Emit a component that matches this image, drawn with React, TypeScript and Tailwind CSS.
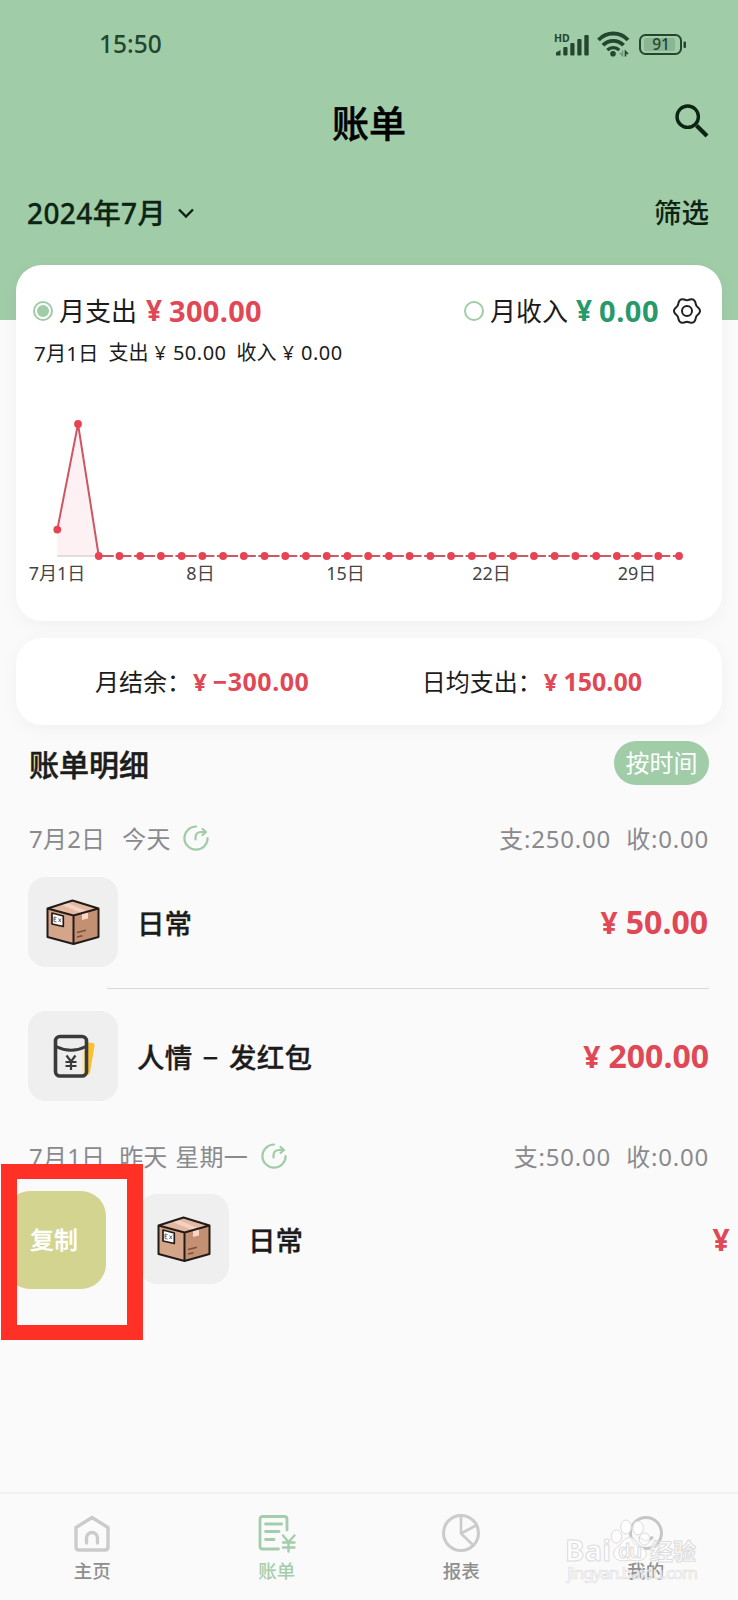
import type { ReactNode } from "react"

const days = Array.from({ length: 31 }, (_, i) => i)
const spend = [50, 250]

const chartX = (day: number) => 57.3 + day * 20.725
const chartY = (value: number) => 156 - value * 0.528

// six soft lobes around the centre
const gearPoints = Array.from({ length: 72 }, (_, i) => {
    const a = (i * Math.PI) / 36
    const r = 11.9 + 1.1 * Math.cos(6 * a)
    return `${(14 + r * Math.cos(a)).toFixed(2)},${(14 + r * Math.sin(a)).toFixed(2)}`
}).join(" ")

function StatusIcons() {
    return (
        <svg className="w-[134px] h-[26px]" viewBox="553 30 134 26" fill="none">
            <text x="554" y="41" fontSize="10.5" fontWeight="700" fill="#24452e">HD</text>
            <g fill="#24452e">
                <path d="M556 51.5l4.5-2.5v5.5h-4.5z" />
                <rect x="563.3" y="46" width="4.2" height="8.5" rx="1" />
                <rect x="570.3" y="42" width="4.2" height="12.5" rx="1" />
                <rect x="577.3" y="38" width="4.2" height="16.5" rx="1" />
                <rect x="584.3" y="34" width="4.4" height="20.5" rx="1" />
            </g>
            <g stroke="#24452e" strokeWidth="3.8">
                <path d="M598.5 39a20 20 0 0 1 29.5 0" />
                <path d="M603 44.300a14 14 0 0 1 20.5 0" />
                <path d="M607.3 49.200a8.500 8.500 0 0 1 12 0" strokeWidth="3.200" />
            </g>
            <circle cx="613" cy="52.800" r="2.800" fill="#24452e" />
            <path d="M622.5 49.500v5l-2.500-2.500" stroke="#6b9a76" strokeWidth="1.500" />
            <path d="M625.5 55.500v-5l2.500 2.500" stroke="#24452e" strokeWidth="1.600" />
            <rect x="640" y="34" width="41" height="19" rx="5.500" stroke="#24452e" strokeWidth="2" />
            <rect x="644" y="37" width="31" height="13" rx="2" fill="#8ab694" />
            <text x="661" y="49.200" fontSize="15.500" fontWeight="500" fill="#24452e" textAnchor="middle">91</text>
            <rect x="683.500" y="40.500" width="2.500" height="6.500" rx="1" fill="#24452e" />
        </svg>
    )
}

function SearchIcon() {
    return (
        <svg className="w-[34px] h-[34px] -mt-[3px]" viewBox="0 0 34 34" fill="none" stroke="#0c2412">
            <circle cx="12.700" cy="12.700" r="10.700" strokeWidth="3.400" />
            <path d="M21.500 21.500L32 32" strokeWidth="4.200" />
        </svg>
    )
}

function GearIcon() {
    return (
        <svg className="w-7 h-7" viewBox="0 0 28 28" fill="none" stroke="#222" strokeWidth="2" strokeLinejoin="round">
            <polygon points={gearPoints} />
            <circle cx="14" cy="14" r="5" />
        </svg>
    )
}

function ShareIcon() {
    return (
        <svg className="w-[26px] h-[26px] -mt-[2px]" viewBox="0 0 26 26" fill="none" stroke="#a0cda8" strokeWidth="2.200" strokeLinecap="round">
            <path d="M13 1.500A11.600 11.600 0 1 0 24.600 13" />
            <path d="M12.500 14.500V13Q12.500 7 18 7H22.500" />
            <path d="M19.500 4L23 7L19.500 10" strokeLinejoin="round" />
        </svg>
    )
}

function BoxIcon() {
    return (
        <svg className="w-[54px] h-[47px]" viewBox="26.500 28 54 47" strokeLinejoin="round">
            <path d="M28 37.500L54 44.500V73L28 66Z" fill="#d5a58a" />
            <path d="M54 44.500L79 37.500V66L54 73Z" fill="#c49074" />
            <path d="M53 29.500L79 37.500L54 44.500L28 37.500Z" fill="#e3b9a2" />
            <path d="M41 33.500L47 31.500L68.500 40.500L62.500 42.300Z" fill="#f3d2c3" />
            <path d="M62.500 42.500L68.500 41V47.500L62.500 49Z" fill="#fbd5c5" />
            <path d="M53 29.500L79 37.500V66L54 73L28 66V37.500ZM28 37.500L54 44.500L79 37.500M54 44.500V73" fill="none" stroke="#221c18" strokeWidth="2" />
            <path d="M32.500 42L43.800 45V55.500L32.500 53Z" fill="#fff" stroke="#221c18" strokeWidth="1.700" />
            <path d="M37 46.500L34.500 46V50.500L37 51M34.500 48.200H36.500M39 47.500L41.500 51M41.500 47.500L39 51" fill="none" stroke="#444" strokeWidth=".8" />
            <path d="M57.500 61.500L66.500 59.200M57.500 66L63 64.700" fill="none" stroke="#7d4f38" strokeWidth="1.500" />
        </svg>
    )
}

function EnvelopeIcon() {
    return (
        <svg className="w-[44px] h-[45px] ml-1" viewBox="0 0 44 45" fill="none">
            <path d="M35 8.500L40 9Q42 9.500 41.500 12L37 38.500Q36.500 41 34 41Z" fill="#fbc02f" />
            <rect x="2.500" y="2.500" width="31" height="39.500" rx="4.500" fill="#ededed" />
            <path d="M29 18L33 16V40H29Z" fill="#fbe6b4" />
            <rect x="2.500" y="2.500" width="31" height="39.500" rx="4.500" stroke="#3a3a3a" strokeWidth="3.600" />
            <path d="M3 12.500Q18 20 33 12.500" stroke="#3a3a3a" strokeWidth="3" />
            <path d="M13.500 21.500L18 27.500L22.500 21.500M18 27.500V36M12.500 28H23.500M12.500 32H23.500" stroke="#3a3a3a" strokeWidth="2.200" />
        </svg>
    )
}

function SpendChart() {
    const line = days.map((d) => `${chartX(d)},${chartY(spend[d] ?? 0)}`).slice(0, 3).join(" ")

    return (
        <svg className="block w-[706px] h-[190px]" viewBox="16 0 706 190" fill="none">
            <path d={`M${chartX(0)} 156V${chartY(50)}L${chartX(1)} ${chartY(250)}L${chartX(2)} 156Z`} fill="#fdf1f3" />
            <path d={`M${chartX(0)} 156H${chartX(2)}`} stroke="#ddd0d2" strokeWidth="1.500" />
            <polyline points={line} stroke="#cf5562" strokeWidth="2" />
            {days.slice(2, 30).map((d) => (
                <path
                    key={d}
                    d={`M${chartX(d)} 156H${chartX(d) + (d % 2 ? 12 : 15)}M${chartX(d) + (d % 2 ? 14.5 : 17.5)} 156H${chartX(d + 1)}`}
                    stroke="#cc5a66"
                    strokeWidth="2"
                />
            ))}
            {days.map((d) => (
                <circle key={d} cx={chartX(d)} cy={chartY(spend[d] ?? 0)} r="3.900" fill="#e84353" />
            ))}
            <g fill="#444" fontSize="18" textAnchor="middle">
                <text x="57" y="180">7月1日</text>
                <text x="200.500" y="180">8日</text>
                <text x="345.500" y="180">15日</text>
                <text x="491.500" y="180">22日</text>
                <text x="637" y="180">29日</text>
            </g>
        </svg>
    )
}

function Tile({ children }: { children: ReactNode }) {
    return (
        <div className="w-[90px] h-[90px] shrink-0 rounded-[18px] bg-[#efefef] flex items-center justify-center">
            {children}
        </div>
    )
}

function Amount({ value }: { value: string }) {
    return (
        <div className="flex items-baseline gap-[8px] text-[32px] font-bold text-[#e04855]">
            <span className="text-[30px]">¥</span>
            <span>{value}</span>
        </div>
    )
}

function DayHeader({ date, label, out }: { date: string; label: ReactNode; out: string }) {
    return (
        <div className="h-[38px] pl-[29px] pr-[29px] flex items-center justify-between text-[24px] leading-none text-[#8a8a8e]">
            <div className="flex items-center">
                <span className="tracking-[0.2px]">{date}</span>
                {label}
                <ShareIcon />
            </div>
            <div className="flex gap-[15px] tracking-[0.8px]">
                <span>支:{out}</span>
                <span>收:0.00</span>
            </div>
        </div>
    )
}

function Tab({ label, color, children }: { label: string; color: string; children: ReactNode }) {
    return (
        <div className="flex-1 flex flex-col items-center pt-[19px]">
            <svg className="w-10 h-10" viewBox="0 0 40 40" fill="none" strokeLinecap="round" strokeLinejoin="round">
                {children}
            </svg>
            <span className={`mt-[8px] text-[18.5px] leading-[20px] font-medium ${color}`}>{label}</span>
        </div>
    )
}

function Watermark() {
    return (
        <svg className="absolute left-[560px] top-[1512px] w-[145px] h-[76px]" viewBox="560 1512 145 76" fill="#fff" fillOpacity=".75" stroke="#dcdcdc" strokeWidth="1">
            <text x="565" y="1561" fontSize="29" fontWeight="700" textLength="46">Bai</text>
            <ellipse cx="616.500" cy="1536.500" rx="5.300" ry="6.500" />
            <ellipse cx="626" cy="1527" rx="5.300" ry="7" />
            <ellipse cx="638" cy="1528" rx="5.300" ry="7" />
            <ellipse cx="644.500" cy="1539" rx="5.300" ry="6" />
            <path d="M630 1537Q635 1538 639 1545Q648 1550 646 1556Q643 1563 630 1560Q617 1563 614 1556Q612 1550 620 1545Q624 1538 630 1537Z" />
            <text x="618" y="1558" fontSize="20" fontWeight="600" textLength="24">du</text>
            <text x="650" y="1560" fontSize="23" fontWeight="700" textLength="46">经验</text>
            <text x="567" y="1579" fontSize="17" textLength="131" strokeWidth=".6">jingyan.baidu.com</text>
        </svg>
    )
}

export default function App() {
    return (
        <div className="relative w-[738px] h-[1600px] overflow-hidden flex flex-col bg-[#fafafa] text-[#1c1c1c] font-['Noto_Sans','Noto_Sans_CJK_SC',sans-serif]">
            <header className="h-[320px] shrink-0 bg-[#a0cca8] text-[#0c2412]">
                <div className="h-[88px] pl-[99px] pr-[51px] flex items-center justify-between">
                    <span className="text-[24.5px] font-medium text-[#24452e]">15:50</span>
                    <StatusIcons />
                </div>
                <div className="h-[68px] px-[29px] flex items-center justify-between">
                    <span className="w-[34px]" />
                    <h1 className="mt-[3px] text-[37px] leading-none font-medium text-black [-webkit-text-stroke:0.5px_currentColor]">账单</h1>
                    <SearchIcon />
                </div>
                <div className="h-[113px] pl-[27px] pr-[29px] flex items-center justify-between text-[28px] leading-none font-medium">
                    <div className="flex items-center gap-[12px] [-webkit-text-stroke:0.3px_currentColor]">
                        <span className="tracking-[0.4px]">2024年7月</span>
                        <svg className="w-4 h-3" viewBox="0 0 16 12" fill="none" stroke="currentColor" strokeWidth="2.400">
                            <path d="M1 2.500L8 9.500L15 2.500" />
                        </svg>
                    </div>
                    <span className="text-[27.5px]">筛选</span>
                </div>
            </header>

            <section className="mx-4 -mt-[55px] h-[356px] shrink-0 rounded-[26px] bg-white shadow-[0_4px_18px_rgba(0,0,0,0.04)] overflow-hidden">
                <div className="h-[68px] pt-[24px] pl-[17px] pr-[21px] flex items-center justify-between text-[26px] leading-none">
                    <div className="flex items-center">
                        <span className="w-5 h-5 rounded-full border-2 border-[#a0cca8] flex items-center justify-center">
                            <span className="w-3 h-3 rounded-full bg-[#a0cca8]" />
                        </span>
                        <span className="ml-[6px]">月支出</span>
                        <span className="ml-[9px] -mt-[2px] text-[28px] font-bold text-[#e04855]">¥</span>
                        <span className="ml-[7px] -mt-[2px] text-[29px] tracking-[0.3px] font-bold text-[#e04855]">300.00</span>
                    </div>
                    <div className="flex items-center">
                        <span className="w-5 h-5 rounded-full border-2 border-[#a0cca8]" />
                        <span className="ml-[6px]">月收入</span>
                        <span className="ml-[8px] -mt-[2px] text-[28px] font-bold text-[#27996a]">¥</span>
                        <span className="ml-[7px] mr-[14px] -mt-[2px] text-[29px] tracking-[0.5px] font-bold text-[#27996a]">0.00</span>
                        <GearIcon />
                    </div>
                </div>
                <div className="h-[40px] pl-[18px] flex items-center text-[20px] leading-none">
                    <span className="text-[20.5px]">7月1日</span>
                    <span className="ml-[10px]">支出</span>
                    <span className="ml-[6px]">¥</span>
                    <span className="ml-[7px] tracking-[0.5px]">50.00</span>
                    <span className="ml-[10px]">收入</span>
                    <span className="ml-[6px]">¥</span>
                    <span className="ml-[7px] tracking-[0.5px]">0.00</span>
                </div>
                <div className="mt-[27px]">
                    <SpendChart />
                </div>
            </section>

            <section className="mx-4 mt-[17px] h-[87px] shrink-0 rounded-[26px] bg-white shadow-[0_4px_18px_rgba(0,0,0,0.04)] flex items-center pl-[79px] pr-[80px] justify-between text-[24px] leading-none">
                <div className="flex items-center">
                    <span>月结余：</span>
                    <span className="ml-[2px] text-[24px] font-bold text-[#e04855]">¥</span>
                    <span className="ml-[6px] text-[25px] tracking-[0.5px] font-bold text-[#e04855]">−300.00</span>
                </div>
                <div className="flex items-center">
                    <span>日均支出：</span>
                    <span className="ml-[2px] text-[24px] font-bold text-[#e04855]">¥</span>
                    <span className="ml-[6px] text-[25px] font-bold text-[#e04855]">150.00</span>
                </div>
            </section>

            <div className="mt-[16px] h-[44px] shrink-0 pl-[29px] pr-7 flex items-center justify-between">
                <h2 className="mt-[4px] text-[30px] leading-none font-medium [-webkit-text-stroke:0.5px_currentColor]">账单明细</h2>
                <button className="w-[95px] h-[44px] mr-px rounded-full bg-[#a0cda8] text-white text-[24px] leading-none">按时间</button>
            </div>

            <div className="mt-[35px] shrink-0">
                <DayHeader date="7月2日" label={<span className="ml-[17px] mr-[12px] tracking-[0.3px]">今天</span>} out="250.00" />
                <div className="mt-[19px] h-[90px] pl-7 pr-[30px] flex items-center">
                    <Tile><BoxIcon /></Tile>
                    <span className="ml-[19px] mt-[3px] flex-1 text-[27.5px] font-medium [-webkit-text-stroke:0.3px_currentColor]">日常</span>
                    <Amount value="50.00" />
                </div>
                <div className="mt-[21px] ml-[107px] mr-[29px] h-px bg-[#d9d9d9]" />
                <div className="mt-[22px] h-[90px] pl-7 pr-[29px] flex items-center">
                    <Tile><EnvelopeIcon /></Tile>
                    <span className="ml-[19px] mt-[3px] flex-1 text-[27.5px] tracking-[0.2px] [word-spacing:3px] font-medium [-webkit-text-stroke:0.3px_currentColor]">人情 − 发红包</span>
                    <Amount value="200.00" />
                </div>
            </div>

            <div className="mt-[37px] shrink-0">
                <DayHeader
                    date="7月1日"
                    label={<><span className="ml-[14px]">昨天</span><span className="ml-[8px] mr-[13px] tracking-[0.2px]">星期一</span></>}
                    out="50.00"
                />
                {/* row swiped to the right, copy action revealed */}
                <div className="mt-[15px] h-[98px] w-[850px] pl-[5px] pr-[30px] flex items-center">
                    <button className="w-[101px] h-[98px] shrink-0 rounded-[25px] bg-[#d2d490] text-white text-[24px] font-medium flex items-center pl-[25px] [-webkit-text-stroke:0.3px_currentColor]">复制</button>
                    <div className="ml-[33px] flex-1 flex items-center -mt-[2px]">
                        <Tile><BoxIcon /></Tile>
                        <span className="ml-[19px] mt-[3px] flex-1 text-[27.5px] font-medium [-webkit-text-stroke:0.3px_currentColor]">日常</span>
                        <Amount value="50.00" />
                    </div>
                </div>
            </div>

            <nav className="mt-auto h-[108px] shrink-0 border-t-2 border-[#f2f2f2] flex">
                <Tab label="主页" color="text-[#8f8f8f]">
                    <g stroke="#cbcbcb" strokeWidth="3.400">
                        <path d="M4 14.500L20 4.500L36 14.500V34Q36 37 33 37H7Q4 37 4 34Z" />
                        <path d="M14.500 30V25a5.500 5.500 0 0 1 11 0V30" />
                    </g>
                </Tab>
                <Tab label="账单" color="text-[#a3cdab]">
                    <g stroke="#a3cdab" strokeWidth="2.800">
                        <path d="M30 17V6Q30 3.500 27.500 3.500H5.500Q3 3.500 3 6V33.500Q3 36 5.500 36H21.500" />
                        <path d="M8.500 11H24.500M8.500 18.500H22M8.500 26.500H17" />
                        <path d="M26 22.500L31.500 29L37.500 22.500M31.500 29V38.500M26 29.500H37.500M26 34.500H37.500" strokeWidth="2.400" />
                    </g>
                </Tab>
                <Tab label="报表" color="text-[#8f8f8f]">
                    <g stroke="#cbcbcb" strokeWidth="3">
                        <circle cx="20" cy="20" r="17.500" />
                        <path d="M20 3V20.500L34 13M20 20.500L32.500 32.500" strokeWidth="2.600" />
                    </g>
                </Tab>
                <Tab label="我的" color="text-[#8f8f8f]">
                    <g stroke="#c6c6c6" strokeWidth="3">
                        <circle cx="20" cy="20" r="15.500" />
                        <path d="M14 24.500Q20 31 26 24.500" />
                    </g>
                </Tab>
            </nav>

            <Watermark />
            <div className="absolute left-px top-[1164px] w-[142px] h-[176px] border-x-[16px] border-y-[15px] border-[#ff3127]" />
        </div>
    )
}
